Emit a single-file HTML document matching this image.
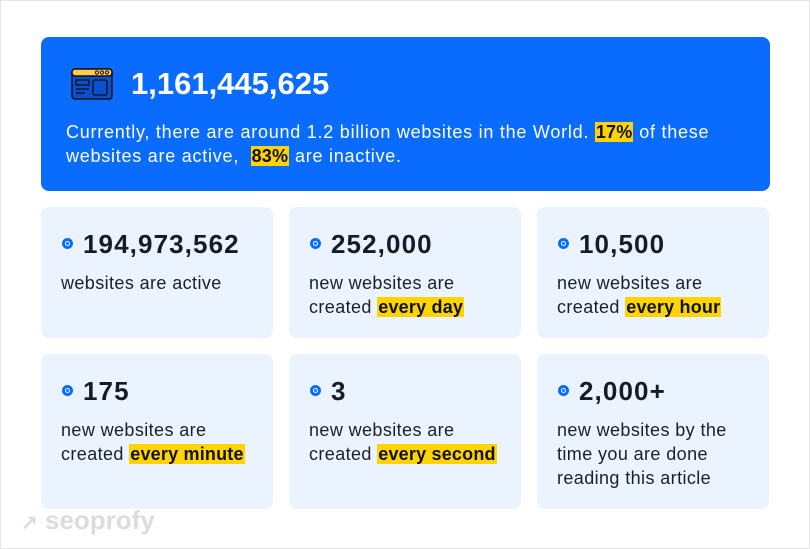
<!DOCTYPE html>
<html><head><meta charset="utf-8"><style>
*{margin:0;padding:0;box-sizing:border-box}
body{width:810px;height:549px;background:#fff;font-family:"Liberation Sans",sans-serif;position:relative;overflow:hidden;border:1px solid #e4e4e4}
.hero{position:absolute;left:40px;top:36px;width:729px;height:154px;background:#0a6cff;border-radius:8px;color:#fff}
.hero .num{position:absolute;left:90px;top:29px;font-size:31px;font-weight:bold}
.hero .txt{position:absolute;left:25px;top:83px;font-size:18px;letter-spacing:0.75px;line-height:24px;width:700px;white-space:nowrap}
.hl{background:#ffd400;color:#111;font-weight:bold;padding:0 1px;letter-spacing:0.2px}
.card{position:absolute;width:232px;background:#ebf3fe;border-radius:8px;color:#1a1f2c}
.card .n{position:absolute;left:42px;top:22px;font-size:26px;letter-spacing:1.1px;font-weight:bold;color:#161b27}
.card .dot{position:absolute;left:21px;top:31px;width:11px;height:11px;border-radius:50%;border:3px solid #0a6cff;background:#fff}
.card .dot::after{content:"";position:absolute;left:1px;top:1px;width:3px;height:3px;background:#0a6cff;border-radius:50%}
.card .t{position:absolute;left:20px;top:64px;font-size:18px;letter-spacing:0.4px;line-height:24px;width:210px;white-space:nowrap}
.logo{position:absolute;left:20px;top:504px;font-size:26px;color:#dcdcdc;font-weight:bold}
</style></head><body>
<div class="hero">
<svg style="position:absolute;left:30px;top:31px" width="42" height="32" viewBox="0 0 42 32"><rect x="1" y="1" width="40" height="30" rx="3" fill="#0a4fd0" stroke="#111" stroke-width="1.5"/><rect x="1" y="1" width="40" height="7" rx="3" fill="#ffcc4d" stroke="#111" stroke-width="1.5"/><circle cx="26" cy="4.5" r="1.6" fill="none" stroke="#111"/><circle cx="31" cy="4.5" r="1.6" fill="none" stroke="#111"/><circle cx="36" cy="4.5" r="1.6" fill="none" stroke="#111"/><rect x="5" y="12" width="13" height="5" fill="none" stroke="#111" stroke-width="1.3"/><line x1="5" y1="21" x2="18" y2="21" stroke="#111" stroke-width="1.3"/><line x1="5" y1="25" x2="14" y2="25" stroke="#111" stroke-width="1.3"/><rect x="22" y="12" width="14" height="15" rx="2" fill="none" stroke="#111" stroke-width="1.3"/></svg>
<div class="num">1,161,445,625</div>
<div class="txt">Currently, there are around 1.2 billion websites in the World. <span class="hl">17%</span> of these<br>websites are active,&nbsp; <span class="hl">83%</span> are inactive.</div>
</div>
<div class="card" style="left:40px;top:206px;height:131px"><div class="dot"></div><div class="n">194,973,562</div><div class="t">websites are active</div></div>
<div class="card" style="left:288px;top:206px;height:131px"><div class="dot"></div><div class="n">252,000</div><div class="t">new websites are<br>created <span class="hl">every day</span></div></div>
<div class="card" style="left:536px;top:206px;height:131px"><div class="dot"></div><div class="n">10,500</div><div class="t">new websites are<br>created <span class="hl">every hour</span></div></div>
<div class="card" style="left:40px;top:353px;height:155px"><div class="dot"></div><div class="n">175</div><div class="t">new websites are<br>created <span class="hl">every minute</span></div></div>
<div class="card" style="left:288px;top:353px;height:155px"><div class="dot"></div><div class="n">3</div><div class="t">new websites are<br>created <span class="hl">every second</span></div></div>
<div class="card" style="left:536px;top:353px;height:155px"><div class="dot"></div><div class="n">2,000+</div><div class="t">new websites by the<br>time you are done<br>reading this article</div></div>
<div class="logo"><span style="font-size:20px">&#8599;</span> seoprofy</div>
</body></html>
